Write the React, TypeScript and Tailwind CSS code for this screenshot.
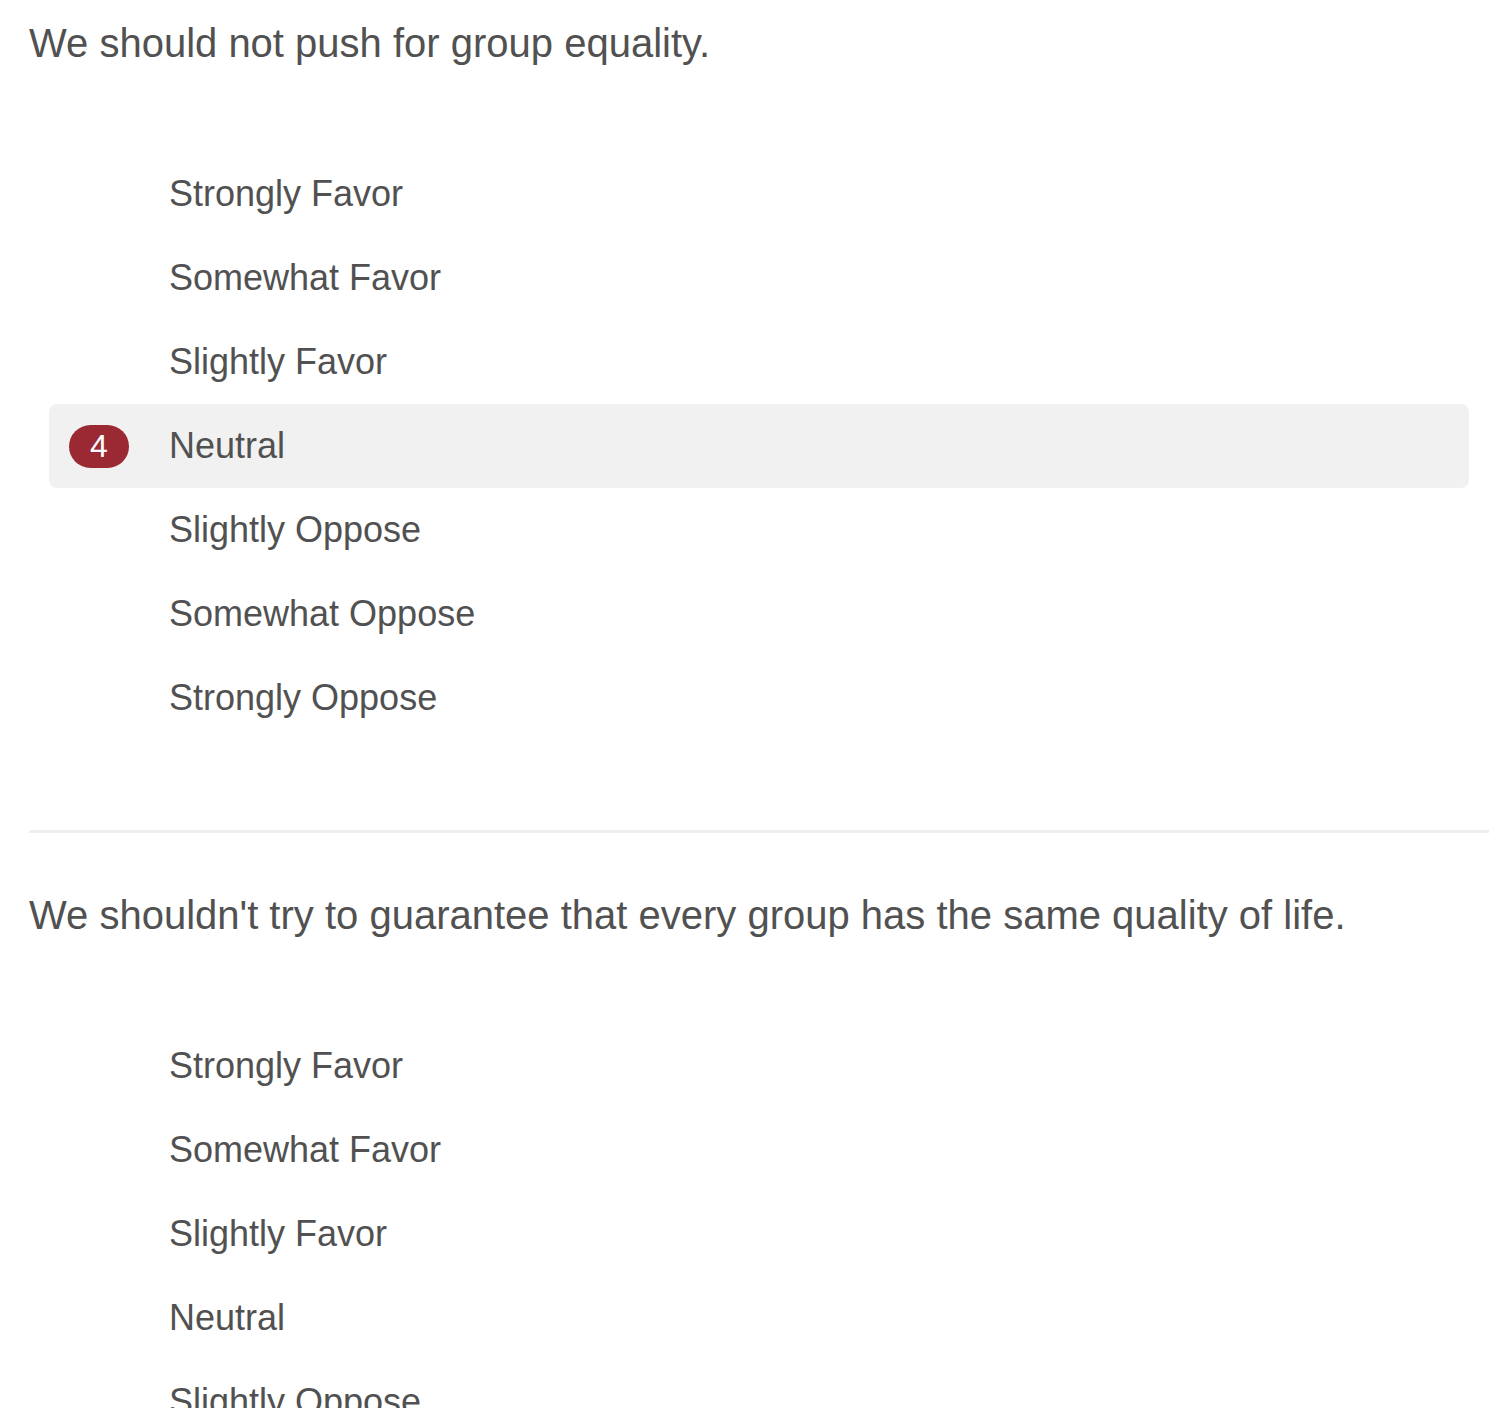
import React from 'react';

const options = [
  'Strongly Favor',
  'Somewhat Favor',
  'Slightly Favor',
  'Neutral',
  'Slightly Oppose',
  'Somewhat Oppose',
  'Strongly Oppose',
];

interface QuestionProps {
  text: string;
  selected?: number | null;
}

const Question: React.FC<QuestionProps> = ({ text, selected }) => {
  return (
    <div>
      <h2 className="text-[40px] leading-[46px] text-[#515151] font-normal">{text}</h2>
      <ul className="mt-[86px] px-5">
        {options.map((opt, i) => {
          const isSel = selected === i + 1;
          return (
            <li
              key={opt}
              className={`flex items-center h-[84px] rounded-lg ${isSel ? 'bg-[#f1f1f1]' : ''}`}
            >
              <div className="w-[120px] pl-5 flex items-center">
                {isSel && (
                  <span className="w-[60px] h-[43px] rounded-full bg-[#9b2933] text-white text-[32px] leading-none flex items-center justify-center">
                    {i + 1}
                  </span>
                )}
              </div>
              <span className="text-[36px] leading-[42px] text-[#515151]">{opt}</span>
            </li>
          );
        })}
      </ul>
    </div>
  );
};

export default function App() {
  return (
    <div className="bg-white min-h-screen pt-5 pl-[29px] pr-[5px] font-['Liberation_Sans',Arial,sans-serif]">
      <Question text="We should not push for group equality." selected={4} />
      <hr className="mt-[90px] mb-[59px] border-0 h-[3px] bg-[#efefef]" />
      <Question text="We shouldn't try to guarantee that every group has the same quality of life." />
    </div>
  );
}
